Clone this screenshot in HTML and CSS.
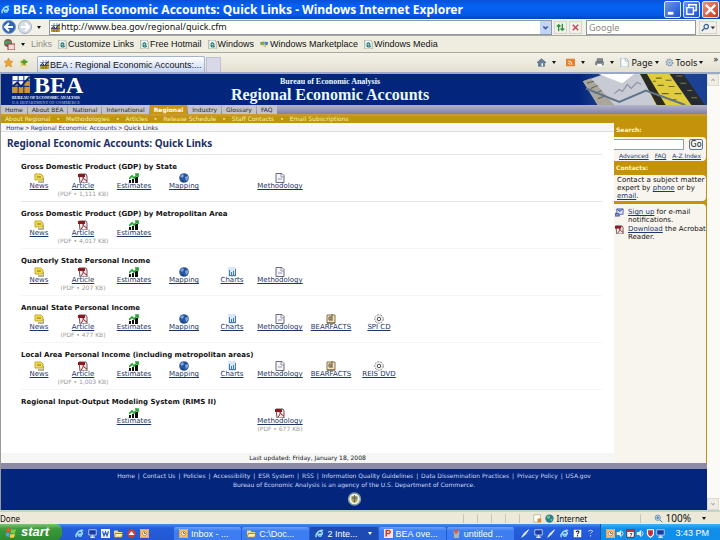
FILE: index.html
```html
<!DOCTYPE html>
<html lang="en">
<head>
<meta charset="utf-8">
<title>BEA : Regional Economic Accounts: Quick Links</title>
<link rel="stylesheet" href="styles.css">
</head>
<body>
<svg class="defs" aria-hidden="true">
  <symbol id="ie" viewBox="0 0 12 12"><path d="M10 7H4c0 3 3 3 5 1.500M3 6.500c0-5 7-5 7 .5M2 11C-1 7 7 0 11 2" fill="none" stroke="currentColor" stroke-width="1.800"/></symbol>
  <symbol id="page" viewBox="0 0 12 12"><path d="M1 0h8l2 3v9H1z" fill="#f4f8f4" stroke="#8a9a96"/><path d="M8 7H4c0 3 3 3 5 1M4 6c0-3 4-3 4 1" fill="none" stroke="#18746c" stroke-width="1.500"/></symbol>
  <symbol id="bea" viewBox="0 0 18 18"><path d="M0 0h18v18H0z" fill="#fff"/><path d="M0 12l5-4 4 4 9-10v16H0z" fill="#c9962c"/><path d="M0 5h18M0 11h18M6 0v18M12 0v18" stroke="#03267c" stroke-width="1"/><path d="M0 11l5-4 4 4 9-10" fill="none" stroke="#03267c" stroke-width="2"/></symbol>
  <symbol id="news" viewBox="0 0 10 10"><path d="M1 1h6l2 2v4H1z" fill="#f1dc4a" stroke="#c7a92c"/><path d="M3 4h4M4 9h6V5" stroke="#77702c" fill="none"/></symbol>
  <symbol id="pdf" viewBox="0 0 10 10"><path d="M1 1h7l1 2v7H2z" fill="#eee" stroke="#69575a"/><path d="M0 1h7v3H0z" fill="#8d1820"/><path d="M3 9c3-3 2-5 2-5s1 3 4 4" fill="none" stroke="#9c1724"/></symbol>
  <symbol id="est" viewBox="0 0 10 10"><path d="M0 10V7h2v3zM3 10V6h2v4zM6 10V4h3v6z" fill="#101010"/><path d="M0 6l3-3 2 2 4-4M6 1h3v3" fill="none" stroke="#24a735" stroke-width="1.700"/></symbol>
  <symbol id="map" viewBox="0 0 10 10"><circle cx="5" cy="5" r="4.800" fill="#28559e"/><path d="M1 3l3-2 1 2-2 2zM6 4l3-1v3L7 8z" fill="#7fa5d9"/><path d="M2 7l3 1-1 1z" fill="#142e64"/></symbol>
  <symbol id="chart" viewBox="0 0 10 10"><path d="M1 0h8v10H1z" fill="#d6e8fa"/><path d="M2.500 3v5M4.500 8V5M6.500 8V4M8.500 8V2M2 8.500h7" fill="none" stroke="#4677b5"/></symbol>
  <symbol id="doc" viewBox="0 0 10 10"><path d="M1 .5h6l2 2v7H1z" fill="#f4f4fa" stroke="#6a6a7b"/><path d="M6 1v3h3M3 6h4" fill="none" stroke="#9999a8"/></symbol>
  <symbol id="bear" viewBox="0 0 10 10"><path d="M1 1h8v8H1z" fill="#efe5c9" stroke="#89754b"/><path d="M3 3h2v3H3zM6 0v7M1 9h8" fill="none" stroke="#665532"/></symbol>
  <symbol id="disc" viewBox="0 0 10 10"><circle cx="5" cy="5" r="4.300" fill="#eee" stroke="#8b8b8b" stroke-dasharray="2 1"/><circle cx="5" cy="5" r="1.700" fill="#fff" stroke="#555"/></symbol>
  <symbol id="mail" viewBox="0 0 10 10"><path d="M2 1h7v6H2z" fill="#dfe5ff" stroke="#5260a8"/><path d="M2 1l3 3 4-3M0 6h4l1 3H0z" fill="#8390ce" stroke="#4b58a0"/></symbol>
  <symbol id="office" viewBox="0 0 12 12"><path d="M0 0h12v12H0z" fill="#f3d58e"/><path d="M1 1h10v10H1z" fill="none" stroke="#d9822b"/><circle cx="6" cy="6" r="3" fill="#fff" stroke="#bc6a1c"/><path d="M6 4v2h2" fill="none" stroke="#444"/></symbol>
  <symbol id="folder" viewBox="0 0 12 12"><path d="M0 2h5l1 2h5v7H0z" fill="#f5d878"/><path d="M2 6h10l-2 5H0z" fill="#fff2b9" stroke="#7c6630"/></symbol>
  <symbol id="monitor" viewBox="0 0 12 12"><path d="M1 1h10v7H1z" fill="#183aa5" stroke="#dbe7ff"/><path d="M6 8v3M3 11h6" stroke="#dbe7ff" stroke-width="2"/></symbol>
  <symbol id="pen" viewBox="0 0 12 12"><path d="M1 11l3-5 6-5-4 6z" fill="#cdd9e6" stroke="#fff"/></symbol>
  <symbol id="shield" viewBox="0 0 12 12"><path d="M2 1h8v5c0 3-4 5-4 5s-4-2-4-5z" fill="#ca2c39" stroke="#fff" stroke-width="1.500"/></symbol>
  <symbol id="speaker" viewBox="0 0 12 12"><path d="M1 4h3l3-3v10L4 8H1z" fill="#e5edf0"/><path d="M8 3q3 3 0 6" fill="none" stroke="#fff"/></symbol>
  <symbol id="cal" viewBox="0 0 12 12"><path d="M1 1h10v10H1z" fill="#fff" stroke="#222"/><path d="M1 1h10v3H1z" fill="#c7333a"/><path d="M5 6h3l-2 4" fill="none" stroke="#333"/></symbol>
  <symbol id="star" viewBox="0 0 12 12"><path d="M6 0l2 4 4 .5-3 3 1 4.500-4-2-4 2 1-4.500-3-3L4 4z" fill="#f0a42c" stroke="#b5731a" stroke-width=".6"/></symbol>
  <symbol id="staradd" viewBox="0 0 12 12"><path d="M6 1l2 3 4 .5-3 3 1 4-4-2-4 2 1-4-3-3L4 4z" fill="#e7c94b"/><path d="M7 2v7M3 5h8" stroke="#4ba12d" stroke-width="3"/></symbol>
  <symbol id="home" viewBox="0 0 12 12"><path d="M0 6l6-5 6 5-2 0v5H2V6z" fill="#65819f" stroke="#3b526e" stroke-width=".7"/><path d="M6 7h2v4H6z" fill="#fff"/></symbol>
  <symbol id="rss" viewBox="0 0 12 12"><path d="M0 1h12v10H0z" fill="#e8812e"/><path d="M3 4q5 0 5 5M3 7q2 0 2 2" fill="none" stroke="#fff" stroke-width="1.300"/></symbol>
  <symbol id="print" viewBox="0 0 12 12"><path d="M3 1h7v4H3zM1 5h10v4H1z" fill="#8c949c" stroke="#55606a"/><path d="M3 8h6v3H3z" fill="#fff"/></symbol>
  <symbol id="sheet" viewBox="0 0 12 12"><path d="M1 0h7l3 3v9H1z" fill="#f8fafc" stroke="#98a4b0"/><path d="M7 0v4h4" fill="none" stroke="#98a4b0"/></symbol>
  <symbol id="gear" viewBox="0 0 12 12"><circle cx="6" cy="6" r="4" fill="#dce8ef" stroke="#8198aa" stroke-width="2.500" stroke-dasharray="2 1"/><circle cx="6" cy="6" r="1.500" fill="#8198aa"/></symbol>
</svg>

<header class="titlebar">
  <svg class="ico-s sky"><use href="#ie"/></svg>
  <h1>BEA : Regional Economic Accounts: Quick Links - Windows Internet Explorer</h1>
  <div class="winbtns">
    <button aria-label="Minimize"><svg viewBox="0 0 16 16"><path d="M3 12h6" stroke="#fff" stroke-width="3"/></svg></button>
    <button aria-label="Restore"><svg viewBox="0 0 16 16"><path d="M5 6V3h8v6h-3M3 6h7v7H3z" fill="none" stroke="#fff" stroke-width="1.500"/></svg></button>
    <button class="close" aria-label="Close"><svg viewBox="0 0 16 16"><path d="M3 3l10 10M13 3L3 13" stroke="#fff" stroke-width="2.500"/></svg></button>
  </div>
</header>

<div class="addressbar">
  <button class="round" aria-label="Back"><svg viewBox="0 0 14 14"><circle cx="7" cy="7" r="6.500" fill="#2f62b6" stroke="#7b98c6"/><path d="M11 7H4M7 3L3 7l4 4" fill="none" stroke="#fff" stroke-width="2"/></svg></button>
  <button class="round" aria-label="Forward"><svg viewBox="0 0 14 14"><circle cx="7" cy="7" r="6.500" fill="#d4dce6" stroke="#a4afbd"/><path d="M3 7h7M7 3l4 4-4 4" fill="none" stroke="#fff" stroke-width="2"/></svg></button>
  <span class="caret"></span>
  <div class="urlbox">
    <svg class="ico-s"><use href="#bea"/></svg>
    <input aria-label="Address" value="http://www.bea.gov/regional/quick.cfm">
    <button class="drop" aria-label="Show addresses"><svg viewBox="0 0 10 12"><path d="M3 5l2 2 2-2" fill="none" stroke="#3c5a9a" stroke-width="1.500"/></svg></button>
  </div>
  <button class="tool" aria-label="Refresh"><svg viewBox="0 0 12 12"><path d="M4 10V3M2 5l2-2 2 2M8 2v7M6 7l2 2 2-2" fill="none" stroke="#359444" stroke-width="1.500"/></svg></button>
  <button class="tool" aria-label="Stop"><svg viewBox="0 0 12 12"><path d="M3 3l6 6M9 3L3 9" stroke="#c64355" stroke-width="1.500"/></svg></button>
  <input class="search" aria-label="Web search" placeholder="Google">
  <button class="tool wide" aria-label="Search"><svg viewBox="0 0 18 12"><circle cx="7" cy="5" r="2.500" fill="none" stroke="#355ca0" stroke-width="1.300"/><path d="M5 7l-3 3" stroke="#355ca0" stroke-width="1.500"/><path d="M12 5h5l-2.500 3z" fill="#333"/></svg></button>
</div>

<nav class="linksbar" aria-label="Links bar">
  <svg class="ico-m" viewBox="0 0 12 12"><circle cx="5" cy="5" r="4" fill="#7a5a55"/><path d="M1 3h7v3H1z" fill="#4e9b5c"/><path d="M5 6h7v6H5z" fill="#e9dddd" stroke="#b13232"/></svg>
  <span class="caret"></span><span class="muted">Links</span>
  <a href="#"><svg class="ico-s"><use href="#page"/></svg>Customize Links</a>
  <a href="#"><svg class="ico-s"><use href="#page"/></svg>Free Hotmail</a>
  <a href="#"><svg class="ico-s"><use href="#page"/></svg>Windows</a>
  <a href="#"><svg class="ico-s" viewBox="0 0 12 12"><path d="M0 3l5-1 1 4-5 1z" fill="#76a64a"/><path d="M6 2l5 1-1 4-4-1z" fill="#4a83c7"/><path d="M3 7l6 0-2 3z" fill="#e4b94c"/></svg>Windows Marketplace</a>
  <a href="#"><svg class="ico-s"><use href="#page"/></svg>Windows Media</a>
</nav>

<div class="tabbar">
  <svg class="ico-s"><use href="#star"/></svg>
  <svg class="ico-s"><use href="#staradd"/></svg>
  <button class="tab"><svg class="ico-s"><use href="#bea"/></svg>BEA : Regional Economic Accounts:...</button>
  <button class="newtab" aria-label="New tab"></button>
  <div class="commands">
    <button aria-label="Home"><svg class="ico-s"><use href="#home"/></svg><span class="caret"></span></button>
    <button aria-label="Feeds"><svg class="ico-s"><use href="#rss"/></svg><span class="caret"></span></button>
    <button aria-label="Print"><svg class="ico-s"><use href="#print"/></svg><span class="caret"></span></button>
    <button class="near"><svg class="ico-s"><use href="#sheet"/></svg>Page<span class="caret"></span></button>
    <button class="near"><svg class="ico-s"><use href="#gear"/></svg>Tools<span class="caret"></span></button>
    <span class="more">»</span>
  </div>
</div>

<div class="viewport">
  <div class="site">
    <header class="banner">
      <div class="logo">
        <svg class="logomark"><use href="#bea"/></svg><b>BEA</b>
        <small>BUREAU OF ECONOMIC ANALYSIS</small>
        <small class="dim">U.S. DEPARTMENT OF COMMERCE</small>
      </div>
      <div class="bannertitle"><p>Bureau of Economic Analysis</p><h2>Regional Economic Accounts</h2></div>
      <svg class="photo" viewBox="0 0 130 30" preserveAspectRatio="none">
        <defs><linearGradient id="fade"><stop offset="0" stop-color="#03267c"/><stop offset=".3" stop-color="#304f93"/><stop offset="1" stop-color="#1a3f92"/></linearGradient></defs>
        <path d="M0 0h130v30H0z" fill="url(#fade)"/>
        <path d="M4 7L26 0h54l18 30H19z" fill="#c9cbd4"/>
        <path d="M4 7l8-3 24 26H19z" fill="#aaa69b"/><path d="M20 0h36L44 9z" fill="#fff"/>
        <path d="M8 9l7-2M12 14l7-3M16 19l7-3M19 24l8-3" stroke="#625f59"/>
        <path d="M36 19l5-4 3 2 5-7 4 4 6-6 4 2" fill="none" stroke="#878ca0"/>
        <path d="M63 0h33l26 30H78z" fill="#e0cc3e"/>
        <path d="M62 0h7l19 30h-9z" fill="#292a24"/>
        <path d="M78 4h6M88 6h6M80 11h6M91 12h6M84 19h7M97 19h7M92 25h7M75 7h3" stroke="#6b6a25"/>
        <path d="M92 0h14l22 30h-14z" fill="#252b31"/><path d="M99 2l6 0M103 9h6M110 16h5M114 23h6" stroke="#827c42"/>
        <path d="M7 14l34 13 27-11 40 14" fill="none" stroke="#60748c" stroke-width="2"/>
      </svg>
    </header>
    <nav class="mainnav" aria-label="Sections">
      <a href="#">Home</a><a href="#">About BEA</a><a href="#">National</a><a href="#">International</a><a class="on" href="#">Regional</a><a href="#">Industry</a><a href="#">Glossary</a><a href="#">FAQ</a>
    </nav>
    <nav class="subnav" aria-label="Regional">
      <a href="#">About Regional</a><i>•</i><a href="#">Methodologies</a><i>•</i><a href="#">Articles</a><i>•</i><a href="#">Release Schedule</a><i>•</i><a href="#">Staff Contacts</a><i>•</i><a href="#">Email Subscriptions</a>
    </nav>
    <div class="columns">
      <main>
        <nav class="crumbs" aria-label="Breadcrumb"><a href="#">Home</a>&gt;<a href="#">Regional Economic Accounts</a>&gt;<span>Quick Links</span></nav>
        <h2 class="pagetitle">Regional Economic Accounts: Quick Links</h2>
        <section><h3>Gross Domestic Product (GDP) by State</h3>
          <div class="links">
            <a class="c1" href="#"><svg><use href="#news"/></svg><u>News</u></a>
            <a class="c2" href="#"><svg><use href="#pdf"/></svg><u>Article</u><small>(PDF • 1,111 KB)</small></a>
            <a class="c3" href="#"><svg><use href="#est"/></svg><u>Estimates</u></a>
            <a class="c4" href="#"><svg><use href="#map"/></svg><u>Mapping</u></a>
            <a class="c6" href="#"><svg><use href="#doc"/></svg><u>Methodology</u></a>
          </div></section>
        <section><h3>Gross Domestic Product (GDP) by Metropolitan Area</h3>
          <div class="links">
            <a class="c1" href="#"><svg><use href="#news"/></svg><u>News</u></a>
            <a class="c2" href="#"><svg><use href="#pdf"/></svg><u>Article</u><small>(PDF • 4,017 KB)</small></a>
            <a class="c3" href="#"><svg><use href="#est"/></svg><u>Estimates</u></a>
          </div></section>
        <section><h3>Quarterly State Personal Income</h3>
          <div class="links">
            <a class="c1" href="#"><svg><use href="#news"/></svg><u>News</u></a>
            <a class="c2" href="#"><svg><use href="#pdf"/></svg><u>Article</u><small>(PDF • 207 KB)</small></a>
            <a class="c3" href="#"><svg><use href="#est"/></svg><u>Estimates</u></a>
            <a class="c4" href="#"><svg><use href="#map"/></svg><u>Mapping</u></a>
            <a class="c5" href="#"><svg><use href="#chart"/></svg><u>Charts</u></a>
            <a class="c6" href="#"><svg><use href="#doc"/></svg><u>Methodology</u></a>
          </div></section>
        <section><h3>Annual State Personal Income</h3>
          <div class="links">
            <a class="c1" href="#"><svg><use href="#news"/></svg><u>News</u></a>
            <a class="c2" href="#"><svg><use href="#pdf"/></svg><u>Article</u><small>(PDF • 477 KB)</small></a>
            <a class="c3" href="#"><svg><use href="#est"/></svg><u>Estimates</u></a>
            <a class="c4" href="#"><svg><use href="#map"/></svg><u>Mapping</u></a>
            <a class="c5" href="#"><svg><use href="#chart"/></svg><u>Charts</u></a>
            <a class="c6" href="#"><svg><use href="#doc"/></svg><u>Methodology</u></a>
            <a class="c7" href="#"><svg><use href="#bear"/></svg><u>BEARFACTS</u></a>
            <a class="c8" href="#"><svg><use href="#disc"/></svg><u>SPI CD</u></a>
          </div></section>
        <section><h3>Local Area Personal Income (including metropolitan areas)</h3>
          <div class="links">
            <a class="c1" href="#"><svg><use href="#news"/></svg><u>News</u></a>
            <a class="c2" href="#"><svg><use href="#pdf"/></svg><u>Article</u><small>(PDF • 1,003 KB)</small></a>
            <a class="c3" href="#"><svg><use href="#est"/></svg><u>Estimates</u></a>
            <a class="c4" href="#"><svg><use href="#map"/></svg><u>Mapping</u></a>
            <a class="c5" href="#"><svg><use href="#chart"/></svg><u>Charts</u></a>
            <a class="c6" href="#"><svg><use href="#doc"/></svg><u>Methodology</u></a>
            <a class="c7" href="#"><svg><use href="#bear"/></svg><u>BEARFACTS</u></a>
            <a class="c8" href="#"><svg><use href="#disc"/></svg><u>REIS DVD</u></a>
          </div></section>
        <section><h3>Regional Input-Output Modeling System (RIMS II)</h3>
          <div class="links">
            <a class="c3" href="#"><svg><use href="#est"/></svg><u>Estimates</u></a>
            <a class="c6" href="#"><svg><use href="#pdf"/></svg><u>Methodology</u><small>(PDF • 677 KB)</small></a>
          </div></section>
        <p class="updated">Last updated: Friday, January 18, 2008</p>
      </main>
      <aside>
        <label class="sidehead" for="q">Search:</label>
        <form class="box searchbox">
          <div class="row"><input id="q" type="text"><button type="button">Go</button></div>
          <div class="adv"><a href="#">Advanced</a> <a href="#">FAQ</a> <a href="#">A-Z Index</a></div>
        </form>
        <h4 class="sidehead">Contacts:</h4>
        <p class="box contact">Contact a subject matter expert by <a href="#">phone</a> or by <a href="#">email</a>.</p>
        <div class="box extras">
          <div><svg><use href="#mail"/></svg><p><a href="#">Sign up</a> for e-mail notifications.</p></div>
          <div><svg><use href="#pdf"/></svg><p><a href="#">Download</a> the Acrobat Reader.</p></div>
        </div>
      </aside>
    </div>
    <footer>
      <p><a href="#">Home</a> | <a href="#">Contact Us</a> | <a href="#">Policies</a> | <a href="#">Accessibility</a> | <a href="#">ESR System</a> | <a href="#">RSS</a> | <a href="#">Information Quality Guidelines</a> | <a href="#">Data Dissemination Practices</a> | <a href="#">Privacy Policy</a> | <a href="#">USA.gov</a></p>
      <p>Bureau of Economic Analysis is an agency of the U.S. Department of Commerce.</p>
      <svg class="seal" viewBox="0 0 14 14"><circle cx="7" cy="7" r="6" fill="#f3f1df" stroke="#7c9a9e" stroke-width="1.500"/><path d="M4 4h6v4c0 2-3 3-3 3s-3-1-3-3z" fill="#b89c55"/><path d="M4 6h6M7 3v7" stroke="#3f6b87"/></svg>
    </footer>
  </div>
  <div class="scroll">
    <svg viewBox="0 0 12 12"><path d="M4 7l2-2 2 2" fill="none" stroke="#b5b4a8" stroke-width="1.500"/></svg>
    <svg viewBox="0 0 12 12"><path d="M4 5l2 2 2-2" fill="none" stroke="#b5b4a8" stroke-width="1.500"/></svg>
  </div>
</div>

<div class="status">
  <span class="done">Done</span>
  <i></i><i></i><i></i><i></i><i></i>
  <svg class="ico-s" viewBox="0 0 12 12"><path d="M1 1h9v10H1z" fill="#fff" stroke="#b6a583"/><path d="M6 6h5v5H6z" fill="#e18a2d"/></svg>
  <svg class="ico-s" viewBox="0 0 12 12"><circle cx="6" cy="6" r="5.500" fill="#267f91"/><path d="M2 3l4-1 1 3-3 2zM7 7l3-1-1 4z" fill="#83c27e"/></svg>
  <span class="zone">Internet</span>
  <i></i>
  <button class="zoom"><svg class="ico-s" viewBox="0 0 12 12"><circle cx="5" cy="5" r="3.500" fill="#d6ebff" stroke="#47739e"/><path d="M8 8l3 3M5 3v4M3 5h4" stroke="#47739e" stroke-width="1.300"/></svg>100%<span class="caret"></span></button>
</div>

<div class="taskbar">
  <button class="start"><svg viewBox="0 0 12 12"><path d="M1 2q2-2 4 0L4 6Q2 4 0 6z" fill="#e8562c"/><path d="M6 2q3 2 5 0l-1 4q-2 2-5 0z" fill="#7ecb45"/><path d="M0 7q2-2 4 0l-1 4Q1 9-1 11z" fill="#5a9dec"/><path d="M5 7q2 2 5 0l-1 4q-3 2-5 0z" fill="#f6d243"/></svg>start</button>
  <div class="quick">
    <svg class="sky"><use href="#ie"/></svg><svg><use href="#monitor"/></svg>
    <svg viewBox="0 0 12 12"><path d="M0 0h12v12H0z" fill="#edf4ff"/><path d="M2 3l2 6 2-5 2 5 2-6" fill="none" stroke="#2458b4" stroke-width="1.500"/></svg>
    <svg><use href="#folder"/></svg>
    <svg viewBox="0 0 12 12"><circle cx="6" cy="6" r="5.500" fill="#c8423a"/><path d="M2 8l4-5 4 5z" fill="#fff"/></svg>
    <svg><use href="#office"/></svg>
  </div>
  <div class="tasks">
    <button><svg><use href="#office"/></svg>Inbox - ...</button>
    <button><svg><use href="#folder"/></svg>C:\Doc...</button>
    <button class="pressed"><svg class="sky"><use href="#ie"/></svg>2 Inte...<span class="caret"></span></button>
    <button><svg viewBox="0 0 12 12"><path d="M0 0h12v12H0z" fill="#f7e7dc"/><path d="M3 10V2h4q3 2 0 4H3" fill="none" stroke="#c8422b" stroke-width="2"/></svg>BEA ove...</button>
    <button><svg viewBox="0 0 12 12"><path d="M2 3h8l-1 9H3z" fill="#a8b5bd"/><path d="M3 1l2 5M8 0L6 6" stroke="#de5838" stroke-width="2"/></svg>untitled ...</button>
  </div>
  <div class="quick small">
    <svg><use href="#pen"/></svg><svg><use href="#monitor"/></svg><svg><use href="#pen"/></svg><svg class="sky"><use href="#ie"/></svg>
    <svg viewBox="0 0 12 12"><path d="M1 1h10v10H1z" fill="#fff"/><path d="M4 4q3-3 4 0L6 7M6 8v2" fill="none" stroke="#222" stroke-width="1.500"/></svg>
    <svg viewBox="0 0 12 12"><path d="M3 3q3-3 6 0L6 6M6 8v2" fill="none" stroke="#fff"/></svg>
  </div>
  <div class="tray">
    <svg><use href="#office"/></svg><svg><use href="#speaker"/></svg><svg><use href="#cal"/></svg><svg><use href="#speaker"/></svg><svg><use href="#shield"/></svg><svg><use href="#monitor"/></svg>
    <time>3:43 PM</time>
  </div>
</div>
</body>
</html>
```
FILE: styles.css
```css
* { box-sizing: border-box; }
body {
  margin: 0;
  min-height: 100vh;
  display: flex;
  flex-direction: column;
  font: 9px/12px "Noto Sans", sans-serif;
  color: #111;
  background: #ece9d8;
}
h1, h2, h3, h4, p { margin: 0; font-weight: normal; }
button, input { font: inherit; color: inherit; margin: 0; padding: 0; border: 0; background: none; min-width: 0; }
a { color: inherit; text-decoration: none; }
svg { flex: none; display: block; }
i { font-style: normal; }
.defs { position: absolute; width: 0; height: 0; }
.ico-s { width: 9px; height: 9px; }
.ico-m { width: 12px; height: 12px; }
.sky { color: #9fe0ff; }
.caret { flex: none; border: 2px solid transparent; border-top: 3px solid currentColor; border-bottom: 0; }

.titlebar { height: 19px; display: flex; align-items: center; gap: 3px; padding: 0 1px; color: #fff; background: linear-gradient(#0a4fd8, #0562f2 30%, #0558e6 80%, #0344bd); }
.titlebar h1 { flex: 1; font: bold 12px/18px "Noto Sans", sans-serif; white-space: nowrap; }
.winbtns { display: flex; gap: 2px; }
.winbtns button { width: 17px; height: 17px; border: 1px solid #dce8ff; border-radius: 2px; background: linear-gradient(135deg, #6a96f2, #1c50cf); }
.winbtns .close { background: linear-gradient(135deg, #ee927a, #c9371b); }
.winbtns svg { width: 100%; height: 100%; }

.addressbar { height: 17px; display: flex; align-items: center; gap: 2px; padding: 0 3px 0 2px; background: #f1f1ea; border-bottom: 1px solid #aaa9a0; }
.round { width: 14px; height: 14px; }
.addressbar .caret { margin: 0 6px 0 3px; }
.urlbox { flex: 1; height: 15px; display: flex; align-items: center; gap: 1px; padding-left: 1px; background: #fffffb; border: 1px solid #8f979f; }
.urlbox input { flex: 1; }
.drop { width: 11px; height: 13px; background: #c3d3f5; }
.tool { width: 13px; height: 13px; border: 1px solid #d5d3ca; }
.tool svg { width: 100%; height: 100%; }
.wide { width: 18px; }
.search { width: 110px; height: 15px; margin: 0 1px 0 2px; padding-left: 2px; background: #fffffb; border: 1px solid #8f979f; }
.search::placeholder { color: #8a8a84; opacity: 1; }

.linksbar { height: 17px; display: flex; align-items: center; gap: 6px; padding-left: 3px; background: #efede0; border-bottom: 1px solid #aaa9a0; font: 9px/12px "Liberation Sans", sans-serif; white-space: nowrap; }
.linksbar a { display: flex; align-items: center; gap: 1px; }
.linksbar .muted { color: #8e8e88; }

.tabbar { height: 21px; display: flex; align-items: flex-end; gap: 6px; padding-left: 4px; background: linear-gradient(#f3f1e8, #e4e1d2); border-bottom: 2px solid #9aa9c6; white-space: nowrap; }
.tabbar > .ico-s { margin-bottom: 5px; }
.tab { width: 168px; height: 16px; margin-left: 3px; display: flex; align-items: center; gap: 1px; padding-left: 2px; background: linear-gradient(#fff, #c7d7f5); border: 1px solid #a5b3cf; border-bottom: 0; border-radius: 2px 2px 0 0; font-family: "Liberation Sans", sans-serif; }
.newtab { width: 15px; height: 15px; margin-left: -5px; background: #d8d8e8; border: 1px solid #c0c0cf; border-bottom: 0; }
.commands { flex: 1; align-self: stretch; display: flex; justify-content: flex-end; align-items: center; gap: 10px; padding-right: 2px; }
.commands button { display: flex; align-items: center; gap: 6px; }
.commands .near { gap: 2px; margin-left: -4px; }
.more { align-self: flex-start; }

.viewport { flex: 1; display: flex; }
.site { flex: 1; display: flex; flex-direction: column; border-left: 1px solid #9b9b93; background: #fff; font: 7px/8px "DejaVu Sans", sans-serif; }
.scroll { width: 13px; display: flex; flex-direction: column; justify-content: space-between; background: #fbfaf6; }
.scroll svg { width: 12px; height: 12px; background: #efede3; border: 1px solid #dddacd; }

.banner { height: 31px; display: grid; grid-template-columns: 130px 1fr 128px; background: #03267c; color: #fff; }
.logo { display: grid; grid-template-columns: 19px 1fr; column-gap: 3px; align-content: start; padding: 2px 0 0 11px; font-family: "Liberation Serif", serif; }
.logomark { width: 18px; height: 17px; }
.logo b { font-size: 24px; line-height: 18px; height: 19px; }
.logo small { grid-column: 1 / -1; font-size: 4px; line-height: 5px; white-space: nowrap; font-weight: bold; }
.logo .dim { color: #8f9ac0; }
.bannertitle { text-align: center; padding: 3px 50px 0 0; font-family: "Liberation Serif", serif; color: #eafaff; }
.bannertitle p { font-size: 8px; line-height: 9px; font-weight: bold; }
.bannertitle h2 { font-size: 16px; line-height: 17px; font-weight: bold; }
.photo { width: 100%; height: 31px; }

.mainnav { height: 9px; display: flex; gap: 1px; background: linear-gradient(#b4b3cb, #8180a5); font-size: 6px; line-height: 9px; }
.mainnav a { padding: 0 4px; background: #c3c3cc; color: #25253c; }
.mainnav .on { background: #c8960f; color: #fff; font-weight: bold; }
.subnav { height: 9px; display: flex; gap: 6px; padding-left: 4px; background: linear-gradient(#ca9c3e, #c4920b 40%); font-size: 6px; line-height: 9px; color: #fbefb8; }

.columns { flex: 1; display: grid; grid-template-columns: 1fr 93px; }
main { display: flex; flex-direction: column; }
.crumbs { height: 9px; display: flex; gap: 1px; padding-left: 5px; font-size: 6px; line-height: 9px; color: #223; background: #f7f7f7; border-bottom: 1px solid #ddd; white-space: nowrap; }
.crumbs a { color: #143078; }
.pagetitle { padding: 4px 0 3px 6px; font: bold 10px/15px "Noto Sans", sans-serif; color: #1b2f66; }
section { height: 47px; margin: 0 12px 0 20px; padding-top: 7px; border-top: 1px solid #f4f5f5; }
.pagetitle + section, .pagetitle + section + section { border-color: #e3e6e6; }
section h3 { font-size: 7px; font-weight: bold; line-height: 11px; white-space: nowrap; }
.links { display: grid; grid-template-columns: 36px 52px 50px 50px 46px 50px 52px 44px; }
.links a { display: flex; flex-direction: column; align-items: center; grid-row: 1; line-height: 7px; color: #1c3668; white-space: nowrap; }
.links svg { width: 10px; height: 10px; }
.links small { font-size: 6px; line-height: 7px; color: #999; }
.c1 { grid-column: 1; } .c2 { grid-column: 2; } .c3 { grid-column: 3; } .c4 { grid-column: 4; }
.c5 { grid-column: 5; } .c6 { grid-column: 6; } .c7 { grid-column: 7; } .c8 { grid-column: 8; }
.updated { margin-top: auto; height: 10px; font-size: 6px; line-height: 9px; text-align: center; background: #f6f6f6; }

aside { display: flex; flex-direction: column; padding-right: 1px; background: #c4920b; }
.sidehead { padding: 3px 0 0 2px; height: 14px; font-weight: bold; font-size: 6px; color: #fff5c8; }
.box { background: #f8f4ee; border-radius: 0 4px 4px 0; }
.box a { color: #183a6c; text-decoration: underline; }
.searchbox { height: 24px; padding-top: 2px; }
.row { display: flex; gap: 5px; }
.row input { flex: 1; height: 11px; background: #fff; border: 1px solid #8d9db0; border-left: 0; }
.row button { width: 14px; height: 11px; margin-right: 3px; background: #f3f6f6; border: 1px solid #5c7894; border-radius: 2px; font-size: 8px; line-height: 9px; }
.adv { display: flex; justify-content: space-between; padding: 2px 5px 0; font-size: 6px; line-height: 8px; }
.contact { height: 26px; padding: 1px 0 0 3px; }
.extras { flex: 1; margin-top: 3px; padding-top: 4px; border-radius: 0 4px 0 0; }
.extras div { display: flex; gap: 4px; padding: 0 0 1px 1px; }
.extras svg { width: 9px; height: 9px; }

footer { height: 47px; display: flex; flex-direction: column; align-items: center; padding-top: 2px; border-top: 6px solid #8d8aa8; background: #03267c; color: #cbd7f7; font-size: 6px; line-height: 9px; white-space: nowrap; }
footer a { padding: 0 1px; }
.seal { width: 15px; height: 14px; margin-top: 3px; }

.status { height: 14px; display: flex; align-items: center; gap: 3px; padding-right: 14px; background: #ece9d8; border-top: 2px solid #c5d2cd; font-size: 8px; line-height: 11px; }
.done { flex: 1; }
.status i { width: 1px; height: 9px; margin-right: 10px; background: #c8c5b6; }
.zone { width: 80px; }
.zoom { display: flex; align-items: center; gap: 3px; font-size: 10px; }
.zoom .caret { margin-left: 8px; }

.taskbar { height: 16px; display: flex; color: #fff; background: linear-gradient(#4b8cf0, #245edb 25%, #2358d4); font: 9px/12px "Liberation Sans", sans-serif; white-space: nowrap; }
.taskbar svg { width: 9px; height: 9px; }
.start { width: 62px; display: flex; gap: 4px; align-items: center; padding-left: 6px; border-radius: 0 6px 6px 0; background: linear-gradient(#7cc576, #3b9a3b 30%, #2f8a30); font: italic bold 13px/16px "Liberation Sans", sans-serif; }
.start svg { width: 11px; height: 11px; }
.quick { display: flex; align-items: center; gap: 4px; padding: 2px 0 0 13px; width: 112px; }
.quick.small { width: 86px; padding-left: 7px; }
.tasks { flex: 1; display: flex; gap: 1px; padding-top: 3px; }
.tasks button { flex: 1; display: flex; align-items: center; gap: 3px; padding-left: 5px; border-radius: 2px 2px 0 0; background: linear-gradient(#6ca0fb, #3c7ef2 30%); }
.tasks .pressed { background: #1c4bb4; }
.tasks .caret { margin-left: 8px; }
.tray { width: 120px; display: flex; align-items: center; gap: 1px; padding: 2px 11px 0 5px; background: linear-gradient(#3db4f5, #118ee9 30%); border-left: 1px solid #0b57b5; }
.tray time { margin-left: auto; }
```
